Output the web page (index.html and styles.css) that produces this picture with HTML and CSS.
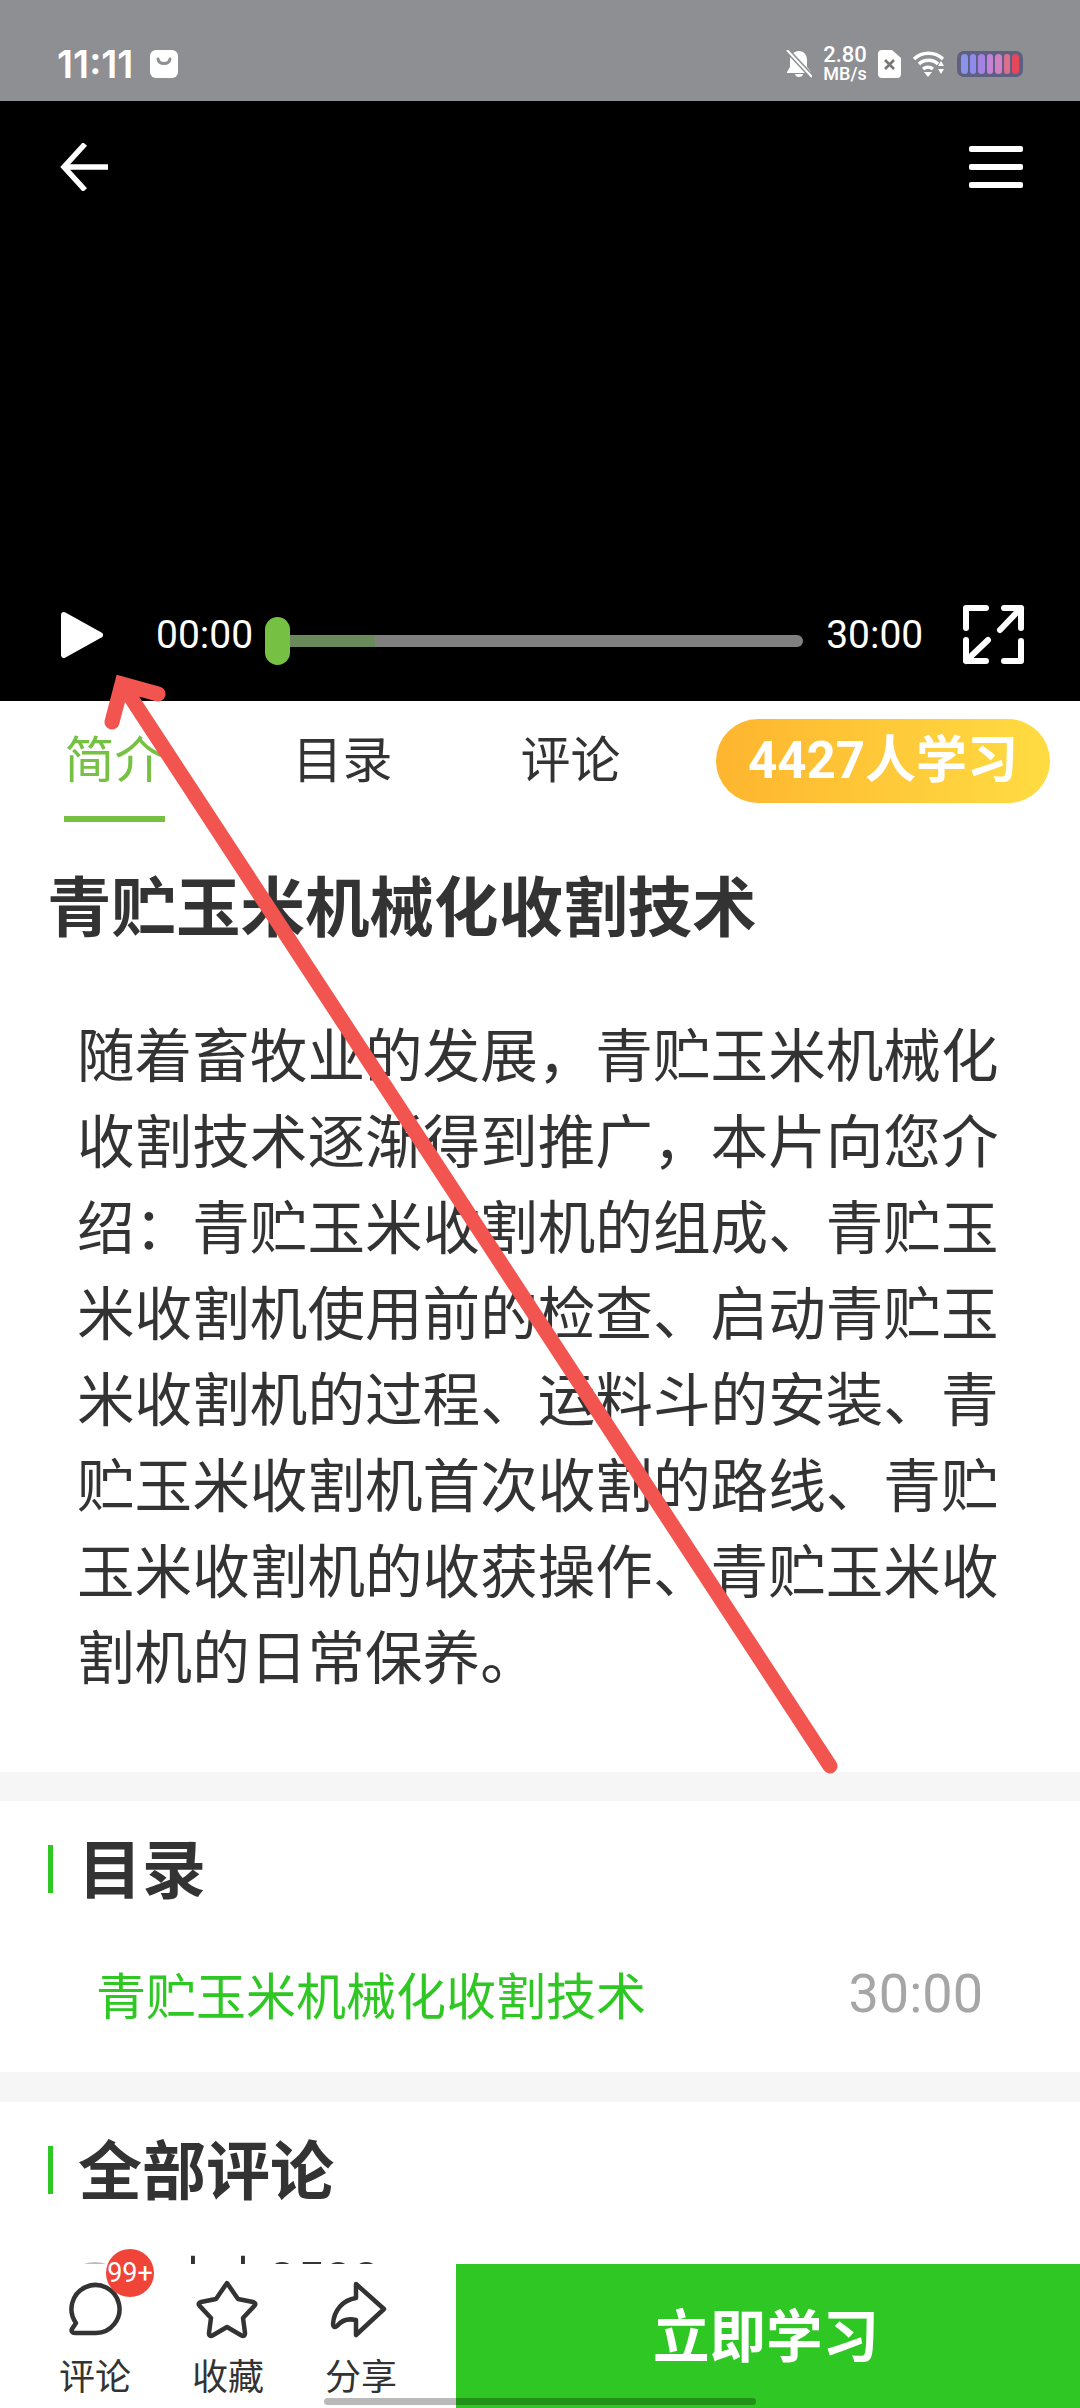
FILE: index.html
```html
<!DOCTYPE html>
<html lang="zh-CN">
<head>
    <meta charset="UTF-8">
    <meta name="viewport" content="width=device-width, initial-scale=1.0">
    <title>青贮玉米机械化收割技术</title>
    <link rel="stylesheet" href="styles.css">
</head>
<body>
    <div class="page">
        <div class="status-bar">
            <div class="status-left">
                <span class="clock">11:11</span>
                <svg class="msg-icon" viewBox="0 0 28 28"><rect width="28" height="28" rx="6" fill="#fff"/><path d="M8 9c1 6 11 6 12 0" fill="none" stroke="#8e8f93" stroke-width="3" stroke-linecap="round"/></svg>
            </div>
            <div class="status-right">
                <svg class="bell-icon" viewBox="0 0 26 28"><path d="M13 1c5 0 8 4 8 9v7l4 5v1H1v-1l3-5v-7c0-5 4-9 9-9zM9 24h8c0 2-2 3-4 3s-4-1-4-3z" fill="#fff"/><path d="M2 1l24 26" stroke="#8e8f93" stroke-width="5"/><path d="M1 0l25 27" stroke="#fff" stroke-width="2"/></svg>
                <div class="speed"><span class="speed-num">2.80</span><span class="speed-unit">MB/s</span></div>
                <svg class="sim-icon" viewBox="0 0 23 28"><path d="M4 0h10l9 8v16a4 4 0 0 1-4 4H4a4 4 0 0 1-4-4V4a4 4 0 0 1 4-4z" fill="#fff"/><path d="M7 10l9 9M16 10l-9 9" stroke="#777" stroke-width="2.6"/></svg>
                <svg class="wifi-icon" viewBox="0 0 34 28"><path d="M2 9a21 21 0 0 1 29 0M7 14a14 14 0 0 1 19 0M11 19a8 8 0 0 1 10 0" fill="none" stroke="#fff" stroke-width="3.4"/><path d="M12 22h8l-4 5zM26 16l3-5 3 5zM26 19h6l-3 5z" fill="#fff"/></svg>
                <div class="battery">
                    <i style="background:#8b93e8"></i><i style="background:#8f8cec"></i><i style="background:#a583e4"></i><i style="background:#c583d6"></i><i style="background:#d47fc4"></i><i style="background:#dc6f8e"></i><i style="background:#e4485c"></i>
                </div>
            </div>
        </div>

        <div class="video">
            <div class="video-top">
                <svg class="back-icon" viewBox="0 0 48 48"><path d="M48 24H4M25 1L4 24l21 23" fill="none" stroke="#fff" stroke-width="5.5"/></svg>
                <div class="menu-icon"><span></span><span></span><span></span></div>
            </div>
            <div class="controls">
                <svg class="play-icon" viewBox="0 0 42 46"><path d="M3 3l36 20L3 43z" fill="#fff" stroke="#fff" stroke-width="6" stroke-linejoin="round"/></svg>
                <span class="video-time">00:00</span>
                <div class="track">
                    <div class="buffered"></div>
                    <div class="thumb"></div>
                </div>
                <span class="video-time">30:00</span>
                <svg class="full-icon" viewBox="0 0 62 60"><path d="M3 23V3h20M41 3h17v20M58 3L37 25M3 35v21h20M3 56l22-21M58 36v20H41" fill="none" stroke="#fff" stroke-width="6" stroke-linecap="round" stroke-linejoin="round"/></svg>
            </div>
        </div>

        <div class="tabs">
            <div class="tab tab-active">简介</div>
            <div class="tab">目录</div>
            <div class="tab">评论</div>
            <div class="learners">4427人学习</div>
        </div>

        <section class="intro">
            <h1 class="course-title">青贮玉米机械化收割技术</h1>
            <p class="course-desc">随着畜牧业的发展，青贮玉米机械化收割技术逐渐得到推广，本片向您介绍：青贮玉米收割机的组成、青贮玉米收割机使用前的检查、启动青贮玉米收割机的过程、运料斗的安装、青贮玉米收割机首次收割的路线、青贮玉米收割机的收获操作、青贮玉米收割机的日常保养。</p>
        </section>

        <section class="block block-catalog">
            <h2 class="block-title">目录</h2>
            <div class="catalog-row">
                <span class="catalog-name">青贮玉米机械化收割技术</span>
                <span class="catalog-time">30:00</span>
            </div>
        </section>

        <section class="block block-comments">
            <h2 class="block-title">全部评论</h2>
            <div class="comment-row">
                <span class="avatar"></span>
                <span class="comment-user">木木8500</span>
            </div>
        </section>

        <div class="bottom-bar">
            <div class="actions">
                <div class="action">
                    <svg class="action-icon" viewBox="0 0 62 60"><path d="M32 53H11c-3 0-4-2-3-4l4-6A24 24 0 1 1 32 53z" fill="none" stroke="#333" stroke-width="4.5" stroke-linejoin="round"/></svg>
                    <span class="badge">99+</span>
                    <span class="action-label">评论</span>
                </div>
                <div class="action">
                    <svg class="action-icon" viewBox="0 0 62 60"><path d="M30 3l11 16 15 3c2 .4 3 2 1.600 3.600L46 38l2 15c.3 2.400-1.500 3.500-3.500 2.500L30 47l-14.500 8.500c-2 1-3.800-.1-3.500-2.500l2-15L2.400 25.600C1 24 2 22.400 4 22l15-3z" fill="none" stroke="#333" stroke-width="4.5" stroke-linejoin="round"/></svg>
                    <span class="action-label">收藏</span>
                </div>
                <div class="action">
                    <svg class="action-icon" viewBox="0 0 62 60"><path d="M26 4l28 25-28 26V40C17 38 11 41 7 46c-2 2-4 1-4-2C4 30 13 20 26 18z" fill="none" stroke="#333" stroke-width="4.5" stroke-linejoin="round"/></svg>
                    <span class="action-label">分享</span>
                </div>
            </div>
            <button class="study-btn">立即学习</button>
        </div>
        <div class="home-bar"></div>

        <svg class="red-arrow" viewBox="0 0 1080 2408"><path d="M830 1766L122 684M112 722L122 684L158 694" fill="none" stroke="#f25550" stroke-width="15" stroke-linecap="round" stroke-linejoin="miter"/></svg>
    </div>
</body>
</html>
```

FILE: styles.css
```css
* {
    box-sizing: border-box;
    margin: 0;
    padding: 0;
}

body {
    font-family: Roboto, "Noto Sans CJK SC", sans-serif;
    background-color: #fff;
    color: #333;
}

.page {
    position: relative;
    width: 1080px;
    height: 2408px;
    overflow: hidden;
    background-color: #f6f6f6;
}

/* status bar */
.status-bar {
    height: 101px;
    background-color: #8e8f93;
    color: #fff;
    display: flex;
    justify-content: space-between;
    align-items: center;
    padding: 26px 57px 0 57px;
}

.status-left {
    display: flex;
    align-items: center;
    gap: 17px;
}

.clock {
    font-family: Inter, sans-serif;
    font-size: 38px;
    font-weight: 600;
}

.msg-icon {
    width: 28px;
    height: 28px;
}

.status-right {
    display: flex;
    align-items: center;
}

.bell-icon {
    width: 26px;
    height: 28px;
    margin-right: 11px;
}

.speed {
    display: flex;
    flex-direction: column;
    align-items: center;
    width: 44px;
    font-weight: 500;
    margin-right: 11px;
}

.speed-num {
    font-size: 22px;
    line-height: 20px;
}

.speed-unit {
    font-size: 18px;
    line-height: 18px;
}

.sim-icon {
    width: 23px;
    height: 28px;
    margin-right: 11px;
}

.wifi-icon {
    width: 34px;
    height: 28px;
    margin-right: 11px;
}

.battery {
    width: 66px;
    height: 26px;
    border-radius: 7px;
    background-color: #5d6080;
    display: flex;
    gap: 2px;
    padding: 3px 4px;
}

.battery i {
    flex: 1;
    border-radius: 4px;
}

/* video */
.video {
    height: 600px;
    background-color: #000;
    display: flex;
    flex-direction: column;
    justify-content: space-between;
}

.video-top {
    display: flex;
    justify-content: space-between;
    align-items: center;
    padding: 42px 57px 0 60px;
}

.back-icon {
    width: 48px;
    height: 48px;
}

.menu-icon {
    width: 54px;
    display: flex;
    flex-direction: column;
    gap: 12px;
}

.menu-icon span {
    height: 6px;
    border-radius: 2px;
    background-color: #fff;
}

.controls {
    display: flex;
    align-items: center;
    padding: 0 0 36px 60px;
}

.play-icon {
    flex: none;
    width: 44px;
    height: 46px;
    margin-right: 52px;
}

.video-time {
    font-size: 39px;
    color: #fff;
}

.track {
    position: relative;
    flex: none;
    width: 538px;
    height: 12px;
    margin: 12px 23px 0 12px;
    border-radius: 6px;
    background-color: #808080;
}

.buffered {
    width: 110px;
    height: 12px;
    border-radius: 6px 0 0 6px;
    background-color: #6a8a5c;
}

.thumb {
    position: absolute;
    left: 0;
    top: -18px;
    width: 25px;
    height: 48px;
    border-radius: 13px;
    background-color: #76c043;
}

.full-icon {
    flex: none;
    width: 62px;
    height: 60px;
    margin-left: 40px;
}

/* tabs */
.tabs {
    height: 130px;
    background-color: #fff;
    display: flex;
    align-items: flex-start;
    padding: 18px 30px 0 64px;
}

.tab {
    flex: none;
    width: 101px;
    height: 103px;
    margin-right: 127px;
    font-size: 50px;
    line-height: 84px;
    text-align: center;
    color: #333;
}

.tab:nth-child(3) {
    margin-right: 0;
}

.tab-active {
    color: #76c043;
    border-bottom: 6px solid #76c043;
}

.learners {
    flex: none;
    width: 334px;
    height: 84px;
    margin-left: auto;
    border-radius: 42px;
    background: linear-gradient(90deg, #feb52f, #ffdc42);
    color: #fff;
    font-size: 51px;
    font-weight: 700;
    line-height: 84px;
    text-align: center;
    white-space: nowrap;
}

/* intro */
.intro {
    height: 941px;
    background-color: #fff;
}

.course-title {
    font-size: 64.5px;
    font-weight: 700;
    line-height: 90px;
    padding: 33px 0 0 47px;
}

.course-desc {
    width: 1000px;
    margin-top: 61px;
    padding-left: 77px;
    font-size: 57.6px;
    line-height: 86px;
}

/* blocks */
.block {
    background-color: #fff;
}

.block-catalog {
    height: 271px;
    margin-top: 29px;
}

.block-comments {
    height: 310px;
    margin-top: 30px;
    overflow: hidden;
}

.block-title {
    position: relative;
    font-size: 64px;
    font-weight: 700;
    line-height: 90px;
    padding: 26px 0 0 78px;
}

.block-title::before {
    content: "";
    position: absolute;
    left: 48px;
    top: 44px;
    width: 5px;
    height: 48px;
    background-color: #2fc723;
}

.catalog-row {
    display: flex;
    justify-content: space-between;
    align-items: center;
    padding: 40px 97px 0 96px;
}

.catalog-name {
    font-size: 50px;
    color: #2fc723;
}

.catalog-time {
    font-size: 54px;
    color: #a6a6a6;
}

.comment-row {
    display: flex;
    align-items: flex-start;
    gap: 38px;
    padding: 38px 0 0 60px;
}

.avatar {
    width: 70px;
    height: 70px;
    margin-top: 6px;
    border-radius: 50%;
    background-color: #bbb;
}

.comment-user {
    font-size: 50px;
    line-height: 50px;
    color: #333;
}

/* bottom bar */
.bottom-bar {
    position: absolute;
    left: 0;
    bottom: 0;
    width: 1080px;
    height: 144px;
    background-color: #fff;
    display: flex;
}

.actions {
    width: 456px;
    display: flex;
    padding: 16px 0 0 40px;
    gap: 23px;
}

.action {
    position: relative;
    width: 110px;
    display: flex;
    flex-direction: column;
    align-items: center;
}

.action-icon {
    width: 62px;
    height: 60px;
    overflow: visible;
}

.action-label {
    font-size: 36px;
    line-height: 44px;
    margin-top: 16px;
}

.badge {
    position: absolute;
    left: 66px;
    top: -31px;
    width: 48px;
    height: 48px;
    border-radius: 50%;
    background-color: #f04438;
    color: #fff;
    font-size: 27px;
    line-height: 48px;
    text-align: center;
}

.study-btn {
    flex: 1;
    border: none;
    padding: 0 4px 8px 0;
    background-color: #2fc723;
    color: #fff;
    font-family: inherit;
    font-size: 56.5px;
    font-weight: 700;
}

.home-bar {
    position: absolute;
    left: 324px;
    bottom: 3px;
    width: 432px;
    height: 7px;
    border-radius: 4px;
    background-color: rgba(0, 0, 0, 0.27);
}

/* annotation drawn over the page */
.red-arrow {
    position: absolute;
    left: 0;
    top: 0;
    width: 1080px;
    height: 2408px;
    pointer-events: none;
}
```
